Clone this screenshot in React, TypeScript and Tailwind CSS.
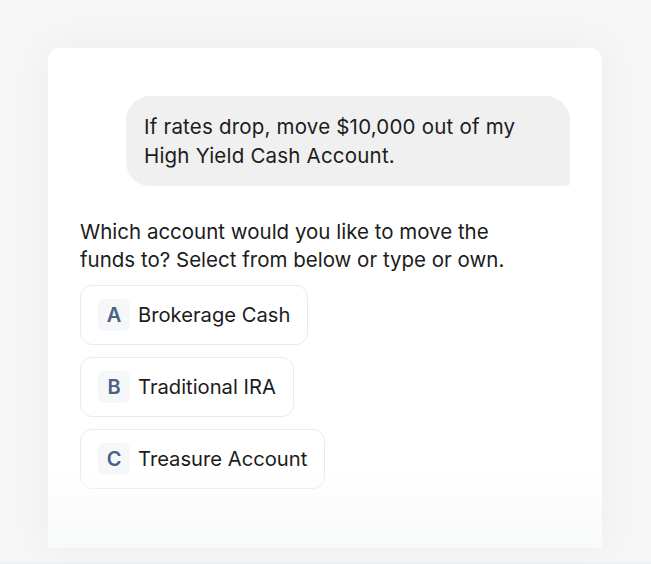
const options = [
  { key: "A", label: "Brokerage Cash" },
  { key: "B", label: "Traditional IRA" },
  { key: "C", label: "Treasure Account" },
];

export default function App() {
  return (
    <div
      className="w-full h-[564px] bg-[#f6f6f6] flex flex-col overflow-hidden"
      style={{ fontFamily: "Inter, 'Noto Sans', sans-serif" }}
    >
      <div className="flex-1 px-12 pt-12">
        <div className="relative w-[554px] h-[500px] rounded-t-xl bg-white shadow-[0_0_40px_rgba(0,0,0,0.045)] px-8 pt-12 overflow-hidden">
          <div className="ml-auto w-[444px] rounded-3xl rounded-br-[4px] bg-[#f0f0f0] pl-[18px] pr-[24px] py-[16px] text-[20.5px] leading-[29px] tracking-[0.2px] text-[#1c1c1c]">
            If rates drop, move $10,000 out of my High Yield Cash Account.
          </div>

          <p className="mt-8 w-[440px] text-[20.5px] leading-[28px] text-[#1c1c1c]">
            Which account would you like to move the funds to? Select from below or type or own.
          </p>

          <div className="mt-[11px] flex flex-col items-start gap-3">
            {options.map((o) => (
              <button
                key={o.key}
                className="h-[60px] flex items-center gap-2 rounded-xl border border-[#ebebeb] bg-white pl-[17px] pr-[17px]"
              >
                <span className="w-8 h-8 rounded-md bg-[#f6f7f8] flex items-center justify-center text-[20px] font-semibold text-[#4b6282]">
                  {o.key}
                </span>
                <span className="text-[20.2px] text-[#1c1c1c]">{o.label}</span>
              </button>
            ))}
          </div>

          <div className="absolute left-0 right-0 bottom-0 h-[80px] bg-gradient-to-b from-white/0 to-[#f8f9fa]" />
        </div>
      </div>
      <div className="h-[2px] bg-[#eef2f6]" />
    </div>
  );
}
